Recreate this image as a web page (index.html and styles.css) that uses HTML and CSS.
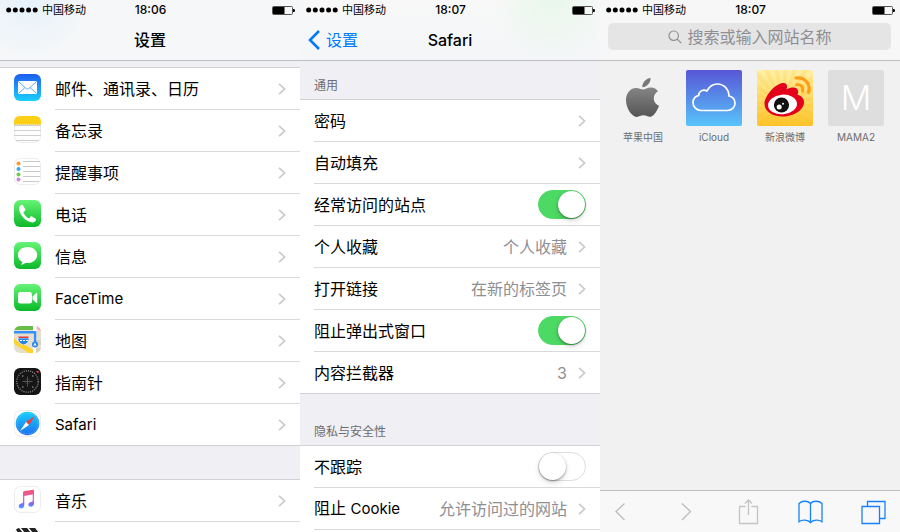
FILE: index.html
```html
<!DOCTYPE html>
<html lang="zh-CN">
<head>
    <meta charset="UTF-8">
    <meta name="viewport" content="width=device-width, initial-scale=1.0">
    <title>Safari 设置</title>
    <link rel="stylesheet" href="styles.css">
</head>
<body>
    <!-- shared symbols -->
    <svg class="symbols" aria-hidden="true">
        <symbol id="signal" viewBox="0 0 32 6">
            <circle cx="2.700" cy="3" r="2.500"/><circle cx="9.300" cy="3" r="2.500"/><circle cx="16" cy="3" r="2.500"/><circle cx="22.600" cy="3" r="2.500"/><circle cx="29.200" cy="3" r="2.500"/>
        </symbol>
        <symbol id="battery" viewBox="0 0 23 9">
            <rect x=".5" y=".5" width="20" height="8" rx="1" fill="none" stroke="#555"/>
            <rect x="1" y="1" width="11.5" height="7"/>
            <path d="M21 3h1q1 0 1 1.5T22 6h-1z"/>
        </symbol>
        <symbol id="chevron" viewBox="0 0 8 12">
            <path d="M1 .8 6.6 6 1 11.2" fill="none" stroke="#c7c7cc" stroke-width="1.6"/>
        </symbol>
    </svg>

    <section class="phone">
        <header class="top-bar tint-blue">
            <div class="status">
                <span class="carrier"><svg class="signal"><use href="#signal"/></svg>中国移动</span>
                <span class="time">18:06</span>
                <svg class="battery"><use href="#battery"/></svg>
            </div>
            <div class="nav"><h1>设置</h1></div>
        </header>
        <ul class="list list-first">
            <li><a class="row" href="#">
                <svg class="app-icon" viewBox="0 0 27 27">
                    <defs><linearGradient id="mail" x2="0" y2="1"><stop stop-color="#1d5df0"/><stop offset="1" stop-color="#1bd0fd"/></linearGradient></defs>
                    <rect width="27" height="27" rx="6" fill="url(#mail)"/>
                    <rect x="4" y="7" width="19" height="13" rx="1.5" fill="#fff"/>
                    <path d="M5 8l7.2 6.6q1.3 1 2.6 0L22 8M5 19l6-5.5M22 19l-6-5.5" fill="none" stroke="#4da3ef" stroke-width=".9"/>
                </svg>
                <span class="row-body"><span class="name">邮件、通讯录、日历</span><svg class="chevron"><use href="#chevron"/></svg></span>
            </a></li>
            <li><a class="row" href="#">
                <svg class="app-icon" viewBox="0 0 27 27">
                    <rect x=".5" y=".5" width="26" height="26" rx="6" fill="#fefefe" stroke="#ececec"/>
                    <path d="M0 8.500V6q0-6 6-6h15q6 0 6 6v2.500z" fill="#fdcf16"/>
                    <path d="M1 9h25" stroke="#b49d5b" stroke-width=".6" stroke-dasharray="1 1"/>
                    <path d="M0 9.500h27M0 14.500h27M0 19.500h27M2 24.500h23" stroke="#cfcfd2"/>
                </svg>
                <span class="row-body"><span class="name">备忘录</span><svg class="chevron"><use href="#chevron"/></svg></span>
            </a></li>
            <li><a class="row" href="#">
                <svg class="app-icon" viewBox="0 0 27 27">
                    <rect x=".5" y=".5" width="26" height="26" rx="6" fill="#fff" stroke="#ececec"/>
                    <path d="M9 3.500h17M9 8.500h17M9 13.500h17M9 18.500h17M9 23.500h16" stroke="#c9c9cc"/>
                    <circle cx="4.500" cy="5.500" r="2" fill="#ff962b"/><circle cx="4.500" cy="11" r="2" fill="#34a9f4"/>
                    <circle cx="4.500" cy="16.500" r="2" fill="#72ce45"/><circle cx="4.500" cy="21.500" r="2" fill="#cf88e3"/>
                </svg>
                <span class="row-body"><span class="name">提醒事项</span><svg class="chevron"><use href="#chevron"/></svg></span>
            </a></li>
            <li><a class="row" href="#">
                <svg class="app-icon" viewBox="0 0 27 27">
                    <defs><linearGradient id="green" x2="0" y2="1"><stop stop-color="#65f476"/><stop offset="1" stop-color="#0bb929"/></linearGradient></defs>
                    <rect width="27" height="27" rx="6" fill="url(#green)"/>
                    <path d="M7.500 5c-2 .8-2.900 2.300-2.400 4.700 1.200 5.700 6 11 12 12.600 2.200.6 4.300-.5 4.900-2.500.2-.6 0-1-.6-1.400l-3.300-2c-.6-.4-1.100-.3-1.500.2l-1.100 1.400c-.4.500-.9.500-1.400.1-1.900-1.300-3.400-3-4.500-5-.3-.6-.2-1 .3-1.400l1.100-.9c.5-.4.6-.9.300-1.500L9.200 5.700c-.4-.8-.9-1-1.700-.7z" fill="#fff"/>
                </svg>
                <span class="row-body"><span class="name">电话</span><svg class="chevron"><use href="#chevron"/></svg></span>
            </a></li>
            <li><a class="row" href="#">
                <svg class="app-icon" viewBox="0 0 27 27">
                    <rect width="27" height="27" rx="6" fill="url(#green)"/>
                    <path d="M13.500 5C8 5 3.900 8.600 3.900 13c0 3 1.700 5.500 4.500 7-.2 1.100-.8 1.900-1.600 2.600 1.700-.1 3.200-.7 4.300-1.700.8.1 1.500.2 2.400.2 5.500 0 9.700-3.600 9.700-8.100S19 5 13.500 5z" fill="#fff"/>
                </svg>
                <span class="row-body"><span class="name">信息</span><svg class="chevron"><use href="#chevron"/></svg></span>
            </a></li>
            <li><a class="row" href="#">
                <svg class="app-icon" viewBox="0 0 27 27">
                    <rect width="27" height="27" rx="6" fill="url(#green)"/>
                    <rect x="4" y="8" width="14" height="11.500" rx="2.500" fill="#fff"/>
                    <path d="M18.500 12.500 22.300 9q.9-.6.900.4v9q0 1-.9.300l-3.800-3.200z" fill="#fff"/>
                </svg>
                <span class="row-body"><span class="name latin">FaceTime</span><svg class="chevron"><use href="#chevron"/></svg></span>
            </a></li>
            <li><a class="row" href="#">
                <svg class="app-icon" viewBox="0 0 27 27">
                    <defs><clipPath id="tile"><rect width="27" height="27" rx="6"/></clipPath></defs>
                    <g clip-path="url(#tile)">
                        <path d="M0 0h27v27H0z" fill="#e7dfce"/>
                        <path d="M0 0h19v4H0z" fill="#68bd45"/>
                        <path d="M22 0h5v5q-4-1-5-5z" fill="#f1a9b5"/>
                        <path d="M19 0h3.500v27H19z" fill="#fff"/>
                        <path d="M22 14h5v5h-5zM22 22h5v5h-5z" fill="#d9d1be"/>
                        <path d="M0 12c4 5 12 6 19 12v3h-5C9 22 4 22 0 17z" fill="#ffd22e"/>
                        <path d="M0 6.300h21v10" fill="none" stroke="#3590fa" stroke-width="2.600"/>
                        <path d="M4 12h11q.6 5-5.500 7Q3.500 17 4 12z" fill="#2784e8" stroke="#fff" stroke-width=".6"/>
                        <path d="M4.500 10.500h10V12h-10z" fill="#e23d42"/>
                        <path d="M6 14.500h2m1 0h2m1 0h2" stroke="#fff"/>
                        <circle cx="21" cy="18.500" r="3" fill="#2786ee"/><path d="m21 16.500 1.700 3.400-1.700-.7-1.700.7z" fill="#fff"/>
                    </g>
                </svg>
                <span class="row-body"><span class="name">地图</span><svg class="chevron"><use href="#chevron"/></svg></span>
            </a></li>
            <li><a class="row" href="#">
                <svg class="app-icon" viewBox="0 0 27 27">
                    <rect width="27" height="27" rx="6" fill="#151515"/>
                    <circle cx="13.500" cy="13.500" r="10.700" fill="none" stroke="#999" stroke-width="1.200" stroke-dasharray="1 1.200"/>
                    <path d="M8.500 13.500h10M13.500 8.500v10" stroke="#666" stroke-width=".8"/>
                    <circle cx="13.500" cy="13.500" r="2.500" fill="none" stroke="#444" stroke-width=".5"/>
                    <path d="M8 8h1.500M18 8h1.500M8 19h1.500M18 19h1.500" stroke="#aaa"/>
                    <path d="M22 3h3l-1 2.500z" fill="#f23b35"/>
                </svg>
                <span class="row-body"><span class="name">指南针</span><svg class="chevron"><use href="#chevron"/></svg></span>
            </a></li>
            <li><a class="row" href="#">
                <svg class="app-icon" viewBox="0 0 27 27">
                    <defs><linearGradient id="sea" x2="0" y2="1"><stop stop-color="#19cffc"/><stop offset="1" stop-color="#1d70ef"/></linearGradient></defs>
                    <rect x=".5" y=".5" width="26" height="26" rx="6" fill="#fff" stroke="#ececec"/>
                    <circle cx="13.500" cy="13.500" r="11.800" fill="url(#sea)"/>
                    <circle cx="13.500" cy="13.500" r="10.400" fill="none" stroke="#9fdafb" stroke-width=".8" stroke-dasharray=".5 1.200"/>
                    <path d="m21 6-9 6 3 3z" fill="#f43b35"/><path d="m6 21 6-9 3 3z" fill="#fff"/>
                </svg>
                <span class="row-body"><span class="name latin">Safari</span><svg class="chevron"><use href="#chevron"/></svg></span>
            </a></li>
        </ul>
        <ul class="list list-second">
            <li><a class="row" href="#">
                <svg class="app-icon" viewBox="0 0 27 27">
                    <defs><linearGradient id="note" x2="0" y2="1"><stop stop-color="#fb4f68"/><stop offset=".45" stop-color="#d66ac1"/><stop offset=".75" stop-color="#8568f5"/><stop offset="1" stop-color="#36aaf8"/></linearGradient></defs>
                    <rect x=".5" y=".5" width="26" height="26" rx="6" fill="#fff" stroke="#ececec"/>
                    <path d="M9 6.500q0-1 1-1.200l9-1.600q1-.2 1 .8V17.500c0 2-1.300 3.200-3.200 3.200-3.300 0-3-4.300.2-4.800 1.200-.2 1.700-.5 1.700-1.500V8.500L10.300 10v9c0 2-1.300 3.400-3.100 3.400-3.300 0-3.200-4.200 0-4.800 1.300-.2 1.800-.5 1.800-1.500z" fill="url(#note)"/>
                </svg>
                <span class="row-body"><span class="name">音乐</span><svg class="chevron"><use href="#chevron"/></svg></span>
            </a></li>
            <li class="row">
                <svg class="app-icon" viewBox="0 0 27 27">
                    <rect x=".5" y=".5" width="26" height="26" rx="6" fill="#fff" stroke="#ececec"/>
                    <path d="M2 1.500Q3.500 0 5 0l4 5H4zM7 0h6l4 5h-6zM15 0h6l4 5h-6z" fill="#222"/>
                    <path d="M0 8h27v13q0 6-6 6H6q-6 0-6-6z" fill="#45c2f3"/>
                </svg>
            </li>
        </ul>
    </section>

    <section class="phone">
        <header class="top-bar tint-green">
            <div class="status">
                <span class="carrier"><svg class="signal"><use href="#signal"/></svg>中国移动</span>
                <span class="time">18:07</span>
                <svg class="battery"><use href="#battery"/></svg>
            </div>
            <div class="nav">
                <a class="back" href="#">
                    <svg width="13" height="20" viewBox="0 0 13 20"><path d="M11 1 2 10l9 9" fill="none" stroke="#007aff" stroke-width="2.600"/></svg>设置
                </a>
                <h1>Safari</h1>
            </div>
        </header>
        <h2 class="group-title">通用</h2>
        <ul class="list">
            <li><a class="row" href="#"><span class="row-body"><span class="name">密码</span><svg class="chevron"><use href="#chevron"/></svg></span></a></li>
            <li><a class="row" href="#"><span class="row-body"><span class="name">自动填充</span><svg class="chevron"><use href="#chevron"/></svg></span></a></li>
            <li class="row"><div class="row-body"><label class="name" for="frequent">经常访问的站点</label><input class="switch" type="checkbox" id="frequent" checked></div></li>
            <li><a class="row" href="#"><span class="row-body"><span class="name">个人收藏</span><span class="value">个人收藏</span><svg class="chevron"><use href="#chevron"/></svg></span></a></li>
            <li><a class="row" href="#"><span class="row-body"><span class="name">打开链接</span><span class="value">在新的标签页</span><svg class="chevron"><use href="#chevron"/></svg></span></a></li>
            <li class="row"><div class="row-body"><label class="name" for="popups">阻止弹出式窗口</label><input class="switch" type="checkbox" id="popups" checked></div></li>
            <li><a class="row" href="#"><span class="row-body"><span class="name">内容拦截器</span><span class="value">3</span><svg class="chevron"><use href="#chevron"/></svg></span></a></li>
        </ul>
        <h2 class="group-title group-title-tall">隐私与安全性</h2>
        <ul class="list">
            <li class="row"><div class="row-body"><label class="name" for="track">不跟踪</label><input class="switch" type="checkbox" id="track"></div></li>
            <li><a class="row" href="#"><span class="row-body"><span class="name">阻止 <span class="latin">Cookie</span></span><span class="value">允许访问过的网站</span><svg class="chevron"><use href="#chevron"/></svg></span></a></li>
            <li class="row"><div class="row-body"></div></li>
        </ul>
    </section>

    <section class="phone browser">
        <header class="top-bar">
            <div class="status">
                <span class="carrier"><svg class="signal"><use href="#signal"/></svg>中国移动</span>
                <span class="time">18:07</span>
                <svg class="battery"><use href="#battery"/></svg>
            </div>
            <label class="search">
                <svg width="14" height="14" viewBox="0 0 14 14" fill="none" stroke="#8e8e93" stroke-width="1.200"><circle cx="5.700" cy="5.700" r="4.700"/><path d="m9.200 9.200 4 4"/></svg>
                <input type="text" placeholder="搜索或输入网站名称" aria-label="搜索或输入网站名称">
            </label>
        </header>
        <main class="favorites">
            <a class="favorite" href="#">
                <svg class="tile" viewBox="0 0 56 56">
                    <defs><linearGradient id="apple" x2="0" y2="1"><stop stop-color="#858585"/><stop offset="1" stop-color="#555"/></linearGradient></defs>
                    <path d="M35.500 8c.3 4.800-3.700 9-8.200 9.300C27 12.500 31 8.600 35.500 8z" fill="#777"/>
                    <path d="M28 19.500c2.100 0 4.200-2 8-2 3 0 5.500 1.500 7 3.700-6.200 3.600-5.300 12 1 14.600-1.500 4.300-4.900 10.900-8.900 11-2.500.1-3.500-1.500-6.600-1.500s-4.300 1.500-6.600 1.600C16.500 47 11 38 11 30.300c0-7.800 5-12.300 10-12.300 3 0 5.200 1.500 7 1.500z" fill="url(#apple)"/>
                </svg>
                <span>苹果中国</span>
            </a>
            <a class="favorite" href="#">
                <svg class="tile" viewBox="0 0 56 56">
                    <defs><linearGradient id="sky" x2="0" y2="1"><stop stop-color="#5856d6"/><stop offset="1" stop-color="#58c4fb"/></linearGradient></defs>
                    <rect width="56" height="56" rx="2" fill="url(#sky)"/>
                    <path d="M15 40.500c-4.500 0-8-3.500-8-7.700 0-3.800 2.500-6.500 5.700-7.400-.2-3.800 4.600-6.800 8.100-4.400C23.200 16.600 27 14 31.300 14c6.500 0 11.500 5 11.700 12 3.500.8 6 3.400 6 7.200 0 4.300-3.300 7.300-7.500 7.300z" fill="none" stroke="#fff" stroke-width="1.700"/>
                </svg>
                <span>iCloud</span>
            </a>
            <a class="favorite" href="#">
                <svg class="tile" viewBox="0 0 56 56">
                    <defs>
                        <linearGradient id="sun" x2="0" y2="1"><stop stop-color="#fff0a8"/><stop offset="1" stop-color="#fdc42c"/></linearGradient>
                        <clipPath id="square"><rect width="56" height="56" rx="2"/></clipPath>
                    </defs>
                    <g clip-path="url(#square)">
                        <path d="M0 0h56v56H0z" fill="url(#sun)"/>
                        <circle cx="26" cy="34" r="30" fill="none" stroke="#ffb900" stroke-opacity=".14" stroke-width="60" stroke-dasharray="3.900 3.950"/>
                    </g>
                    <path d="M7.500 34c0-7.500 10-20 18.200-21 4-.4 5.200 2.500 3.800 6.200 4.300-1.900 9.900-2.700 11.300.7.600 1.600.3 3.200-.3 4.900 4 1.200 6.500 3.500 6.500 7.500 0 7.500-9.800 14.200-21.400 14.200C15 46.500 7.500 41.200 7.500 34z" fill="#e3001b"/>
                    <ellipse cx="25.500" cy="34.500" rx="14.500" ry="9.800" fill="#fff" transform="rotate(-5 25 34)"/>
                    <circle cx="24.500" cy="35" r="7.600" fill="#111"/>
                    <circle cx="22.200" cy="37" r="2.500" fill="#fff"/><circle cx="26" cy="33.700" r="1" fill="#fff"/>
                    <path d="M39 8C47.500 6.500 54.200 14 51.500 22.500" fill="none" stroke="#ff9d17" stroke-width="3.200" stroke-linecap="round"/>
                    <path d="M39.500 14.800c4.500-.8 7.200 2.500 6 6.500" fill="none" stroke="#ff9d17" stroke-width="2.800" stroke-linecap="round"/>
                </svg>
                <span>新浪微博</span>
            </a>
            <a class="favorite" href="#">
                <span class="tile letter">M</span>
                <span>MAMA2</span>
            </a>
        </main>
        <footer class="toolbar">
            <button type="button" aria-label="后退" disabled><svg width="25" height="26" viewBox="0 0 25 26"><path d="M12.500 4.500 4 12.500l8.500 8.500" stroke="#bcbcbc"/></svg></button>
            <button type="button" aria-label="前进" disabled><svg width="25" height="26" viewBox="0 0 25 26"><path d="m8 4.500 8.500 8L8 21" stroke="#bcbcbc"/></svg></button>
            <button type="button" aria-label="分享" disabled><svg width="25" height="26" viewBox="0 0 25 26"><path d="M9.500 7.500h-6v17h18v-17h-6M12.500 16V1M9 4.500 12.500 1 16 4.500" stroke="#c4c4c4"/></svg></button>
            <button type="button" aria-label="书签"><svg width="25" height="26" viewBox="0 0 25 26"><path d="M12.500 4.500V24M12.500 4.500C10 1.500 4 1.500 1 4.500v18.200c3-2.200 9-2.200 11.500 1 2.500-3.200 8.500-3.200 11.500-1V4.500C21 1.500 15 1.500 12.500 4.500z"/></svg></button>
            <button type="button" aria-label="标签页"><svg width="25" height="26" viewBox="0 0 25 26"><path d="M1 7.500h17.500v17H1zM6.500 7.500V2.500h17.500v17h-5.500"/></svg></button>
        </footer>
    </section>
</body>
</html>
```
FILE: styles.css
```css
* {
    box-sizing: border-box;
}
body {
    display: flex;
    height: 100vh;
    margin: 0;
    overflow: hidden;
    font-family: Inter, "Noto Sans CJK SC", sans-serif;
    font-size: 16px;
    line-height: 24px;
    color: #000;
    background: #efeff4;
}
a {
    color: inherit;
    text-decoration: none;
}
.symbols {
    position: absolute;
    width: 0;
    height: 0;
}
.phone {
    flex: 1;
    min-width: 0;
    overflow: hidden;
    background: #efeff4;
}

/* status bar and navigation */
.top-bar {
    border-bottom: 1px solid #bfbfc3;
    background: #f7f7f8;
}
.tint-blue {
    background: radial-gradient(circle at 30px 0, #e6f2fb, transparent 60px), #f6f7f8;
}
.tint-green {
    background: radial-gradient(circle at 84% 0, #e8f7eb, transparent 60px), linear-gradient(#f8f8f8, #f4f6f8);
}
.status {
    display: grid;
    grid-template-columns: 1fr auto 1fr;
    align-items: center;
    height: 20px;
    padding: 0 5px 0 6px;
    font-size: 11px;
    line-height: 20px;
}
.carrier {
    display: flex;
    align-items: center;
    gap: 4px;
}
.signal {
    width: 32px;
    height: 6px;
}
.time {
    font-size: 12px;
    font-weight: 500;
}
.battery {
    width: 23px;
    height: 9px;
    justify-self: end;
}
.nav {
    display: grid;
    grid-template-columns: 1fr auto 1fr;
    align-items: center;
    height: 40px;
    padding: 0 8px;
}
.nav h1 {
    grid-column: 2;
    margin: 0;
    font-size: 16px;
    font-weight: 500;
}
.back {
    display: flex;
    align-items: center;
    gap: 5px;
    color: #007aff;
}

/* settings lists */
.list {
    margin: 0;
    padding: 0;
    list-style: none;
    background: #fff;
    border-top: 1px solid #d2d2d6;
    border-bottom: 1px solid #d2d2d6;
}
.list-first {
    margin-top: 6px;
}
.list-second {
    margin-top: 33px;
}
.row {
    display: flex;
    gap: 14px;
    padding-left: 14px;
}
.app-icon {
    flex: none;
    width: 27px;
    height: 27px;
    margin-top: 6px;
}
.row-body {
    display: flex;
    flex: 1;
    align-items: center;
    height: 42px;
    padding-right: 14px;
    border-bottom: 1px solid #d9d9dc;
}
.list li:last-child .row-body {
    height: 41px;
    border-bottom: 0;
}
.name {
    flex: 1;
}
.latin {
    font-size: 15px;
}
.value {
    color: #8e8e93;
}
.chevron {
    width: 8px;
    height: 12px;
    margin-left: 11px;
}
.group-title {
    margin: 0;
    padding: 16px 14px 5px;
    font-size: 12px;
    font-weight: 400;
    line-height: 17px;
    color: #6d6d72;
}
.group-title-tall {
    padding-top: 29px;
}
.switch {
    appearance: none;
    width: 48px;
    height: 29px;
    margin: 0;
    border: 1px solid #dedede;
    border-radius: 15px;
    background: #fff;
}
.switch::before {
    content: "";
    display: block;
    width: 27px;
    height: 27px;
    border-radius: 50%;
    background: #fff;
    box-shadow: 0 1px 2px rgba(0, 0, 0, 0.4), 0 3px 6px rgba(0, 0, 0, 0.12);
}
.switch:checked {
    border-color: #4cd964;
    background: #4cd964;
}
.switch:checked::before {
    margin-left: 19px;
}

/* browser start page */
.browser {
    display: flex;
    flex-direction: column;
    background: #f1f1f1;
}
.search {
    display: flex;
    align-items: center;
    justify-content: center;
    gap: 6px;
    height: 27px;
    margin: 3px 9px 10px 8px;
    border-radius: 5px;
    background: #e5e5e6;
}
.search input {
    width: 9em;
    padding: 0;
    border: 0;
    outline: 0;
    font: inherit;
    background: none;
}
.search input::placeholder {
    color: #8e8e93;
}
.favorites {
    display: grid;
    grid-template-columns: repeat(4, 56px);
    justify-content: space-between;
    align-content: start;
    flex: 1;
    padding: 9px 16px 9px 15px;
}
.favorite {
    display: flex;
    flex-direction: column;
    align-items: center;
    gap: 3px;
    font-size: 10px;
    line-height: 16px;
    color: #6d6d6d;
}
.tile {
    width: 56px;
    height: 56px;
}
.letter {
    border-radius: 2px;
    font-size: 34px;
    font-weight: 300;
    line-height: 56px;
    text-align: center;
    color: #fff;
    background: #dedede;
}
.toolbar {
    display: flex;
    align-items: center;
    justify-content: space-between;
    height: 42px;
    padding: 0 11px 0 8px;
    border-top: 1px solid #c0c0c0;
    background: #f8f8f9;
}
.toolbar button {
    display: flex;
    justify-content: center;
    width: 32px;
    padding: 0;
    border: 0;
    background: none;
}
.toolbar svg {
    fill: none;
    stroke: #1682fa;
    stroke-width: 1.3;
}
```
